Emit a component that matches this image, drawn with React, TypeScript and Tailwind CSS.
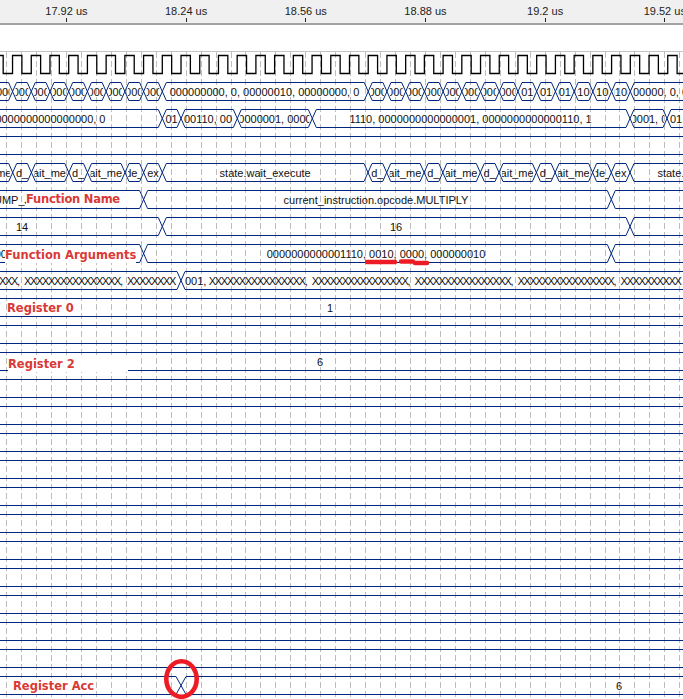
import React from 'react';

interface Seg {
  text: string;
  at: number;
  anchor?: 'start' | 'middle' | 'end';
  prefix?: string;
}

interface BusRow {
  cross: number[];
  segs?: Seg[];
  xs?: boolean;
  wide?: number;
}

const PERIOD = 18.72;
const EDGE = 162.3;
const edge = (k: number) => EDGE + PERIOD * k;

const range = (from: number, to: number) => {
  const out: number[] = [];
  for (let k = from; k <= to; k++) out.push(edge(k));
  return out;
};

const row1Cross = [...range(-8, 0), ...range(11, 25)];
const row4Cross = [12.7, 31.4, 68.8, 87.5, 125, 143.6, 162.3, 368, 386.7, 424.1, 442.8, 480.3, 499, 536.4, 555.1, 592.6, 611.3, 630];
const row4Text = ['d_', 'wait_mem', 'd_', 'wait_mem', 'de_', 'ex', 'state.wait_execute', 'd_', 'wait_mem', 'd_', 'wait_mem', 'd_', 'wait_mem', 'd_', 'wait_mem', 'de_', 'ex'];
const row1Small = Array.from({ length: 8 }, () => '00000');
const row1Right = ['00000', '00000', '00000', '00000', '00000', '00000', '00000', '00000', '0010', '0010', '0010', '0100', '0100', '0100'];

const mid = (a: number, b: number) => (a + b) / 2;

const rows: BusRow[] = [
  {
    cross: row1Cross,
    segs: [
      { text: '0000', at: 2 },
      ...row1Small.map((text, i) => ({ text, at: mid(row1Cross[i], row1Cross[i + 1]) })),
      { text: '000000000, 0, 00000010, 00000000, 0', at: 264.5 },
      ...row1Right.map((text, i) => ({ text, at: mid(row1Cross[9 + i], row1Cross[10 + i]) })),
      { text: '00000, 0, 00000010', at: 633, anchor: 'start' as const },
    ],
  },
  {
    cross: [162.3, 181, 237.3, 312.3, 630, 667],
    segs: [
      { text: '0000000000000000, 0', at: 105.5, anchor: 'end' },
      { text: '01', at: 171.6 },
      { text: '00110, 00', at: 208 },
      { text: '0000001, 0000', at: 275 },
      { text: '1110, 0000000000000001, 0000000000000110, 1', at: 470.5 },
      { text: '0001, 0', at: 649 },
      { text: '01, 0', at: 670, anchor: 'start' },
    ],
  },
  { cross: [] },
  {
    cross: row4Cross,
    segs: [
      { text: 'wait_me', at: 11.5, anchor: 'end' },
      ...row4Text.map((text, i) => ({ text, at: mid(row4Cross[i], row4Cross[i + 1]) })),
      { text: 'state.wait_execute', at: 703 },
    ],
  },
  {
    cross: [143.6, 611.3],
    segs: [
      { text: 'JUMP_J', at: 30, anchor: 'end' },
      { text: 'current_instruction.opcode.MULTIPLY', at: 376 },
    ],
  },
  {
    cross: [162.3, 630],
    segs: [
      { text: '14', at: 22 },
      { text: '16', at: 396 },
    ],
  },
  {
    cross: [143.6, 611.3],
    segs: [
      { text: '00', at: 7, anchor: 'end' },
      { text: '0000000000001110, 0010, 0000, 000000010', at: 376 },
    ],
  },
  {
    cross: [181],
    xs: true,
    segs: [
      { text: 'XXX, XXXXXXXXXXXXXXXX, XXXXXXXX', at: 175, anchor: 'end' },
      { prefix: '001,', text: ' XXXXXXXXXXXXXXXX, XXXXXXXXXXXXXXXX, XXXXXXXXXXXXXXXX, XXXXXXXXXXXXXXXX, XXXXXXXXXX', at: 185, anchor: 'start' },
    ],
  },
  { cross: [], segs: [{ text: '1', at: 330 }] },
  { cross: [] },
  { cross: [], segs: [{ text: '6', at: 320 }] },
  ...Array.from({ length: 11 }, () => ({ cross: [] })),
  { cross: [181], wide: 5, segs: [{ text: '6', at: 619 }] },
];

const ticks = ['17.92 us', '18.24 us', '18.56 us', '18.88 us', '19.2 us', '19.52 us'];

function clockPath() {
  let d = `M ${edge(-9) + 9.36 - PERIOD} 73.5`;
  for (let k = -9; k <= 28; k++) {
    const r = edge(k);
    const f = r + PERIOD / 2;
    d += ` L ${r} 73.5 L ${r} 55.5 L ${f} 55.5 L ${f} 73.5`;
  }
  return d;
}

function Bus({ row, top }: { row: BusRow; top: number }) {
  const bottom = top + 18;
  const w = row.wide ?? 4;
  const stops = [-20, ...row.cross, 720];
  return (
    <g>
      {stops.slice(0, -1).map((a, i) => {
        const b = stops[i + 1];
        const d = `M ${a + w} ${top + 0.5} L ${b - w} ${top + 0.5} M ${a + w} ${bottom + 0.5} L ${b - w} ${bottom + 0.5}`;
        return <path key={a} d={d} className="stroke-[#00277f] fill-none" strokeWidth={1.2} />;
      })}
      {row.cross.map((c) => (
        <path
          key={c}
          d={`M ${c - w} ${top + 0.5} L ${c + w} ${bottom + 0.5} M ${c - w} ${bottom + 0.5} L ${c + w} ${top + 0.5}`}
          className="stroke-[#00277f] fill-none"
          strokeWidth={1}
        />
      ))}
      {row.segs?.map((seg) => {
        const hit = stops.findIndex((s, i) => i < stops.length - 1 && seg.at >= s - (seg.anchor === 'end' ? 6 : 0) && seg.at < stops[i + 1]);
        const left = Math.max(stops[hit] + 3, 0);
        const right = Math.min(stops[hit + 1] - 3, 683);
        return (
          <svg key={seg.text + seg.at} x={left} y={top} width={right - left} height={18} viewBox={`${left} ${top} ${right - left} 18`}>
            <text x={seg.at} y={top + 14} textAnchor={seg.anchor ?? 'middle'} className="fill-[#111]" xmlSpace="preserve">
              {seg.prefix && <tspan>{seg.prefix}</tspan>}
              <tspan dx={seg.prefix ? -3 : 0} className={row.xs ? 'tracking-[-1.34px] [word-spacing:3.56px]' : ''}>
                {seg.text}
              </tspan>
            </text>
          </svg>
        );
      })}
    </g>
  );
}

function Note({ className, children }: { className: string; children: React.ReactNode }) {
  return (
    <div className={`absolute bg-white font-['DejaVu_Sans',sans-serif] font-bold text-[11.5px] leading-[16px] text-[#d93a35] whitespace-nowrap ${className}`}>
      {children}
    </div>
  );
}

export default function App() {
  return (
    <div className="w-[683px] h-[699px] overflow-hidden bg-white font-['Liberation_Sans',sans-serif] text-[11px] flex flex-col">
      <div className="h-[25px] shrink-0 bg-[#f0f0f0] border-b-2 border-[#a3a3a3] pl-[6.6px] grid grid-cols-[repeat(6,119.68px)]">
        {ticks.map((t) => (
          <div key={t} className="flex flex-col items-center">
            <span className="h-[18px] leading-[23px] text-[#222] whitespace-nowrap">{t}</span>
            <span className="w-px h-[4px] bg-[#222]" />
          </div>
        ))}
      </div>
      <div className="relative flex-1">
        <svg width={683} height={674} viewBox="0 25 683 674" className="block">
          <line x1={0} x2={683} y1={51.5} y2={51.5} stroke="#c4c4c4" />
          {Array.from({ length: 46 }, (_, k) => {
            const x = Math.floor(6.6 + 14.96 * k) + 0.5;
            return <line key={k} x1={x} x2={x} y1={52} y2={699} stroke="#bdbdbd" strokeDasharray="6 3" />;
          })}
          <path d={clockPath()} fill="none" stroke="#000" strokeWidth={1.3} />
          {rows.map((row, i) => (
            <Bus key={i} row={row} top={82 + 27 * i} />
          ))}
          <path d="M 367 262 L 395 262" stroke="#ed1c24" strokeWidth={4.5} strokeLinecap="round" />
          <path d="M 401 261.5 L 413 261.5" stroke="#ed1c24" strokeWidth={4.5} strokeLinecap="round" />
          <path d="M 415 263 L 427 263" stroke="#ed1c24" strokeWidth={4.5} strokeLinecap="round" />
          <ellipse cx={181.5} cy={679} rx={15.2} ry={17.8} fill="none" stroke="#ed1c24" strokeWidth={4.6} />
        </svg>
        <Note className="left-[26px] top-[166px] w-[109px] tracking-[-0.25px]">Function Name</Note>
        <Note className="left-[5px] top-[222px] w-[131px]">Function Arguments</Note>
        <Note className="left-[7px] top-[275px]">Register 0</Note>
        <Note className="left-[8px] top-[331px] w-[120px]">Register 2</Note>
        <Note className="left-[13px] top-[653px]">Register Acc</Note>
      </div>
    </div>
  );
}
